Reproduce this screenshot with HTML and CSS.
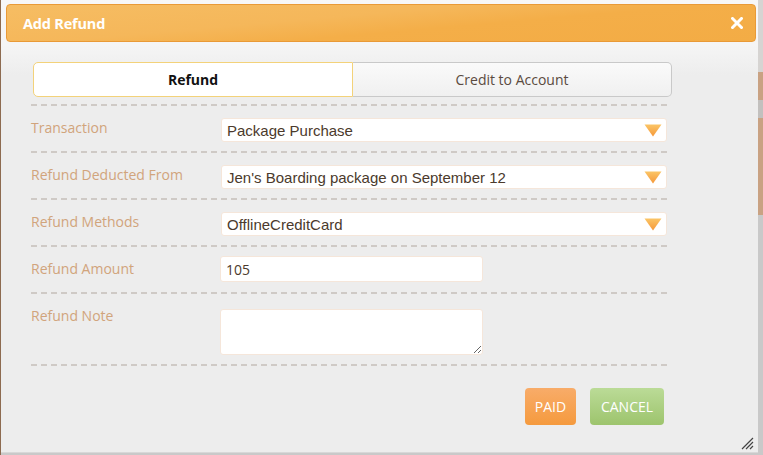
FILE: index.html
```html
<!DOCTYPE html>
<html>
<head>
<meta charset="utf-8">
<link rel="stylesheet" href="styles.css">
</head>
<body>
<div class="page">
  <div class="dialog">
    <div class="titlebar">
      <span class="title">Add Refund</span>
      <svg class="close" width="12" height="12" viewBox="0 0 12 12"><path d="M1.5 1.5 L10.5 10.5 M10.5 1.5 L1.5 10.5" stroke="#fff" stroke-width="3" stroke-linecap="square"/></svg>
    </div>
    <div class="content">
      <div class="tabs">
        <div class="tab active">Refund</div>
        <div class="tab">Credit to Account</div>
      </div>
      <div class="form">
        <div class="dash"></div>
        <div class="row">
          <div class="label">Transaction</div>
          <div class="select"><span>Package Purchase</span><svg class="arrow" width="18" height="13" viewBox="0 0 18 13"><defs><linearGradient id="g1" x1="0" y1="0" x2="0" y2="1"><stop offset="0" stop-color="#fbc566"/><stop offset="1" stop-color="#f5983a"/></linearGradient></defs><path d="M0.5 0.5 H17.5 L9 12.5 Z" fill="url(#g1)"/></svg></div>
        </div>
        <div class="dash"></div>
        <div class="row">
          <div class="label">Refund Deducted From</div>
          <div class="select"><span>Jen's Boarding package on September 12</span><svg class="arrow" width="18" height="13" viewBox="0 0 18 13"><path d="M0.5 0.5 H17.5 L9 12.5 Z" fill="url(#g1)"/></svg></div>
        </div>
        <div class="dash"></div>
        <div class="row">
          <div class="label">Refund Methods</div>
          <div class="select"><span>OfflineCreditCard</span><svg class="arrow" width="18" height="13" viewBox="0 0 18 13"><path d="M0.5 0.5 H17.5 L9 12.5 Z" fill="url(#g1)"/></svg></div>
        </div>
        <div class="dash"></div>
        <div class="row">
          <div class="label">Refund Amount</div>
          <div class="input">105</div>
        </div>
        <div class="dash"></div>
        <div class="row tall">
          <div class="label">Refund Note</div>
          <textarea class="note"></textarea>
        </div>
        <div class="dash"></div>
      </div>
      <div class="actions">
        <button class="btn paid">PAID</button>
        <button class="btn cancel">CANCEL</button>
      </div>
    </div>
    <svg class="grip" width="14" height="14" viewBox="0 0 14 14"><path d="M13 2 L2 13 M13 6 L6 13 M13 10 L10 13" stroke="#444" stroke-width="1.2"/></svg>
  </div>
</div>
</body>
</html>
```
FILE: styles.css
```css
html, body {
  margin: 0;
  padding: 0;
}
body {
  background: linear-gradient(to bottom, #d6d4d2 0 72px, #c9a283 72px 100px, #c2c0be 100px 118px, #c9a283 118px 215px, #c9c9c9 215px 100%);
  width: 763px;
  height: 455px;
  overflow: hidden;
  font-family: "Open Sans", "Liberation Sans", sans-serif;
}
.page {
  display: flex;
  height: 455px;
  border-left: 1px solid #8d6b50;
  box-sizing: border-box;
}
.dialog {
  position: relative;
  width: 757px;
  height: 453px;
  background: linear-gradient(#f7f7f7 0, #f5f5f5 45px, #ededed 75px, #ededed 100%);
  box-sizing: border-box;
  border-bottom: 1px solid #d8d8d8;
}
.titlebar {
  display: flex;
  align-items: center;
  justify-content: space-between;
  margin: 4px 2px 0 5px;
  height: 38px;
  box-sizing: border-box;
  border: 1px solid #e99a37;
  border-radius: 4px;
  background: linear-gradient(175deg, #f6bd63 0%, #f5b75a 40%, #f4ae48 60%, #f3ac45 100%);
  padding: 0 12px 0 16px;
}
.title {
  color: #fff;
  font-weight: 700;
  font-size: 14.5px;
  letter-spacing: -0.2px;
}
.close {
  display: block;
  margin-top: -1px;
}
.content {
  padding: 20px 0 0 30px;
}
.tabs {
  display: flex;
  margin-left: 2px;
  width: 639px;
  height: 35px;
}
.tab {
  flex: 1;
  display: flex;
  align-items: center;
  justify-content: center;
  font-size: 14px;
  color: #5a4b40;
  border: 1px solid #c9c9c9;
  border-left: none;
  border-radius: 0 5px 5px 0;
  background: linear-gradient(#fafafa, #f0f0f0);
  box-sizing: border-box;
}
.tab.active {
  border: 1px solid #f3d27a;
  border-radius: 5px 0 0 5px;
  background: #fff;
  color: #111;
  font-weight: 700;
}
.form {
  width: 639px;
  margin-top: 7px;
}
.dash {
  height: 2px;
  background: repeating-linear-gradient(to right, #cfcac6 0 6px, transparent 6px 10px);
}
.row {
  display: flex;
  align-items: flex-start;
  height: 45px;
}
.row.tall {
  height: 70px;
}
.label {
  width: 190px;
  padding-top: 12px;
  line-height: 20px;
  font-size: 14px;
  color: #d1a47c;
}
.select {
  margin-top: 12px;
  width: 446px;
  height: 24px;
  box-sizing: border-box;
  background: #fff;
  border: 1px solid #f5e6da;
  border-radius: 3px;
  display: flex;
  align-items: center;
  justify-content: space-between;
  padding: 0 4px 0 5px;
  font-family: "Liberation Sans", Arial, sans-serif;
  font-size: 15px;
  color: #4b3a2c;
}
.select span {
  padding-top: 1px;
}
.arrow {
  display: block;
  margin-top: 1px;
}
.input {
  margin-top: 9px;
  margin-left: -1px;
  width: 263px;
  height: 26px;
  box-sizing: border-box;
  background: #fff;
  border: 1px solid #f5e6da;
  border-radius: 3px;
  padding: 0 5px;
  display: flex;
  align-items: center;
  font-size: 14px;
  color: #4b3a2c;
}
.note {
  margin: 15px 0 0 -1px;
  width: 263px;
  height: 46px;
  box-sizing: border-box;
  background: #fff;
  border: 1px solid #f5e6da;
  border-radius: 3px;
  resize: both;
  font-family: inherit;
  outline: none;
}
.actions {
  display: flex;
  justify-content: flex-end;
  gap: 14px;
  width: 633px;
  margin-top: 22px;
}
.btn {
  height: 37px;
  border: none;
  border-radius: 4px;
  color: #fff;
  font-family: "Open Sans", "Liberation Sans", sans-serif;
  font-size: 14px;
  padding: 0;
}
.paid {
  width: 51px;
  background: linear-gradient(#f8ac69, #f59a3e);
}
.cancel {
  width: 74px;
  background: linear-gradient(#bbdb97, #9dc46d);
}
.grip {
  position: absolute;
  right: 4px;
  bottom: 2px;
}
```
